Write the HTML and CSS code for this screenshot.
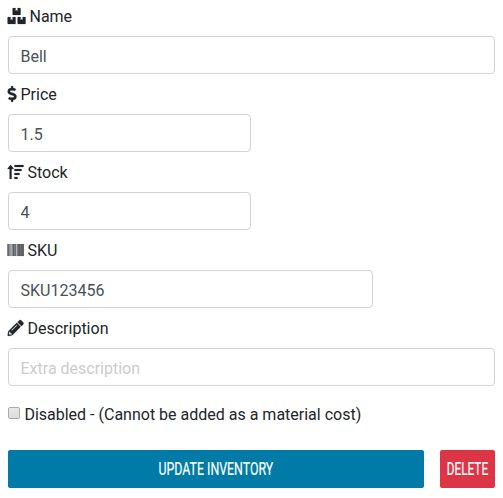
FILE: index.html
```html
<!DOCTYPE html>
<html lang="en">
<head>
<meta charset="utf-8">
<title>Inventory item</title>
<link rel="stylesheet" href="styles.css">
</head>
<body>
<form class="item-form">
  <div class="field">
    <label for="name"><svg class="icon icon-boxes" viewBox="0 0 576 512"><path d="M560 288h-80v96l-32-21.3-32 21.3v-96h-80c-8.8 0-16 7.2-16 16v192c0 8.8 7.2 16 16 16h224c8.8 0 16-7.2 16-16V304c0-8.8-7.2-16-16-16zm-384-64h224c8.8 0 16-7.2 16-16V16c0-8.8-7.2-16-16-16h-80v96l-32-21.3L256 96V0h-80c-8.8 0-16 7.2-16 16v192c0 8.8 7.2 16 16 16zm64 64h-80v96l-32-21.3L96 384v-96H16c-8.8 0-16 7.2-16 16v192c0 8.8 7.2 16 16 16h224c8.8 0 16-7.2 16-16V304c0-8.8-7.2-16-16-16z"/></svg> Name</label>
    <input class="control" id="name" type="text" value="Bell">
  </div>
  <div class="field">
    <label for="price"><svg class="icon icon-dollar" viewBox="0 0 288 512"><path d="M209.2 233.4l-108-31.6C88.7 198.2 80 186.5 80 173.5c0-16.3 13.2-29.5 29.5-29.5h66.3c12.2 0 24.2 3.7 34.2 10.5 6.1 4.1 14.3 3.1 19.5-2l34.8-34c7.1-6.9 6.1-18.4-1.8-24.5C238 74.8 207.4 64.1 176 64V16c0-8.8-7.2-16-16-16h-32c-8.8 0-16 7.2-16 16v48h-2.5C45.8 64-5.4 118.7.5 183.6c4.2 46.1 39.4 83.6 83.8 96.6l102.5 30c12.5 3.7 21.2 15.3 21.2 28.3 0 16.3-13.2 29.5-29.5 29.5h-66.3C100 368 88 364.3 78 357.5c-6.1-4.1-14.3-3.1-19.5 2l-34.8 34c-7.1 6.9-6.1 18.4 1.8 24.5 24.5 19.2 55.1 29.9 86.5 30v48c0 8.8 7.2 16 16 16h32c8.8 0 16-7.2 16-16v-48.2c46.6-.9 90.3-28.6 105.7-72.7 21.5-61.6-14.6-124.8-72.5-141.7z"/></svg> Price</label>
    <input class="control half" id="price" type="text" value="1.5">
  </div>
  <div class="field">
    <label for="stock"><svg class="icon" viewBox="0 0 512 512"><path d="M16 160h48v304a16 16 0 0 0 16 16h32a16 16 0 0 0 16-16V160h48c14.2 0 21.4-17.2 11.3-27.3l-80-96a16 16 0 0 0-22.6 0l-80 96C-5.4 142.7 1.8 160 16 160z"/><rect x="216" y="32" width="296" height="64" rx="16"/><rect x="216" y="160" width="232" height="64" rx="16"/><rect x="216" y="288" width="168" height="64" rx="16"/><rect x="216" y="416" width="104" height="64" rx="16"/></svg> Stock</label>
    <input class="control half" id="stock" type="text" value="4">
  </div>
  <div class="field">
    <label for="sku"><svg class="icon" viewBox="0 0 512 512"><path d="M0 448V64h18v384H0zm26.857-.273V64H36v383.727h-9.143zm27.143 0V64h8.857v383.727H54zm44.857 0V64h8.857v383.727h-8.857zm36 0V64h17.714v383.727h-17.714zm44.857 0V64h8.857v383.727h-8.857zm18 0V64h8.857v383.727h-8.857zm18 0V64h8.857v383.727h-8.857zm35.715 0V64h18v383.727h-18zm44.857 0V64h18v383.727h-18zm35.999 0V64h18.001v383.727h-18.001zm36.001 0V64h18.001v383.727h-18.001zm26.857 0V64h18v383.727h-18zm45.143 0V64h26.857v383.727h-26.857zm35.714 0V64h9.143v383.727H476zm18 .273V64h18v384h-18z"/></svg> SKU</label>
    <input class="control three-quarter" id="sku" type="text" value="SKU123456">
  </div>
  <div class="field">
    <label for="description"><svg class="icon" viewBox="0 0 512 512"><path d="M497.9 142.1l-46.1 46.1c-4.7 4.7-12.3 4.7-17 0l-111-111c-4.7-4.7-4.7-12.3 0-17l46.1-46.1c18.7-18.7 49.1-18.7 67.9 0l60.1 60.1c18.8 18.7 18.8 49.1 0 67.9zM284.2 99.8L21.6 362.4.4 483.9c-2.9 16.4 11.4 30.6 27.8 27.8l121.5-21.3 262.6-262.6c4.7-4.7 4.7-12.3 0-17l-111-111c-4.8-4.7-12.4-4.7-17.1 0zM124.1 339.9c-5.5-5.5-5.5-14.3 0-19.8l154-154c5.5-5.5 14.3-5.5 19.8 0s5.5 14.3 0 19.8l-154 154c-5.5 5.5-14.3 5.5-19.8 0zM88 424h48v36.3l-64.5 11.3-31.1-31.1L51.7 376H88v48z"/></svg> Description</label>
    <input class="control" id="description" type="text" placeholder="Extra description">
  </div>
  <label class="check"><input class="checkbox" type="checkbox"><span>Disabled - (Cannot be added as a material cost)</span></label>
  <div class="actions">
    <button class="btn update" type="button"><span class="btn-text">UPDATE INVENTORY</span></button>
    <button class="btn delete" type="button"><span class="btn-text">DELETE</span></button>
  </div>
</form>
</body>
</html>
```
FILE: styles.css
```css
* {
  box-sizing: border-box;
}

body {
  margin: 0;
  padding: 5px 8px 0;
  background: #fff;
  color: #212529;
  font: 16px/24px Roboto, sans-serif;
}

.item-form {
  display: flex;
  flex-direction: column;
  gap: 9px;
}

.field {
  display: flex;
  flex-direction: column;
  gap: 7px;
}

.field label {
  margin-left: -.5px;
}

.icon {
  width: 16px;
  height: 16px;
  overflow: visible;
  vertical-align: -2px;
  fill: currentColor;
  stroke: currentColor;
  stroke-width: 6;
  transform: translateX(-.4px);
}

.icon-boxes {
  width: 18px;
}

.icon-dollar {
  width: 9px;
}

.control {
  width: 100%;
  height: 38px;
  padding: 7px 12px 5px 11.5px;
  border: 1px solid #ced4da;
  border-radius: 4px;
  background: #fff;
  color: #495057;
  font: inherit;
}

.control::placeholder {
  color: #ccc;
  opacity: 1;
}

.half {
  width: 243px;
}

.three-quarter {
  width: 365px;
}

.check {
  display: flex;
  align-items: flex-start;
  gap: 4.4px;
  margin-top: 8px;
}

.checkbox {
  appearance: none;
  width: 12px;
  height: 12px;
  margin: 4px 0 0;
  border: 1px solid #aaa;
  border-radius: 2px;
  background: linear-gradient(#e8e8e8, #dcdcdc);
}

.actions {
  display: flex;
  gap: 16px;
  margin-top: 14px;
}

.btn {
  display: flex;
  align-items: center;
  justify-content: center;
  height: 38px;
  padding: 0;
  border: 0;
  border-radius: 2px;
  color: #fff;
  font: 18.5px/24px Roboto, sans-serif;
  -webkit-text-stroke: .2px #fff;
}

.update {
  flex: 1;
  background: #007ba7;
}

.delete {
  width: 55px;
  background: #dc3545;
}

.btn-text {
  flex: none;
  white-space: nowrap;
  transform: scaleX(.668);
}

.delete .btn-text {
  transform: scaleX(.637);
}
```
